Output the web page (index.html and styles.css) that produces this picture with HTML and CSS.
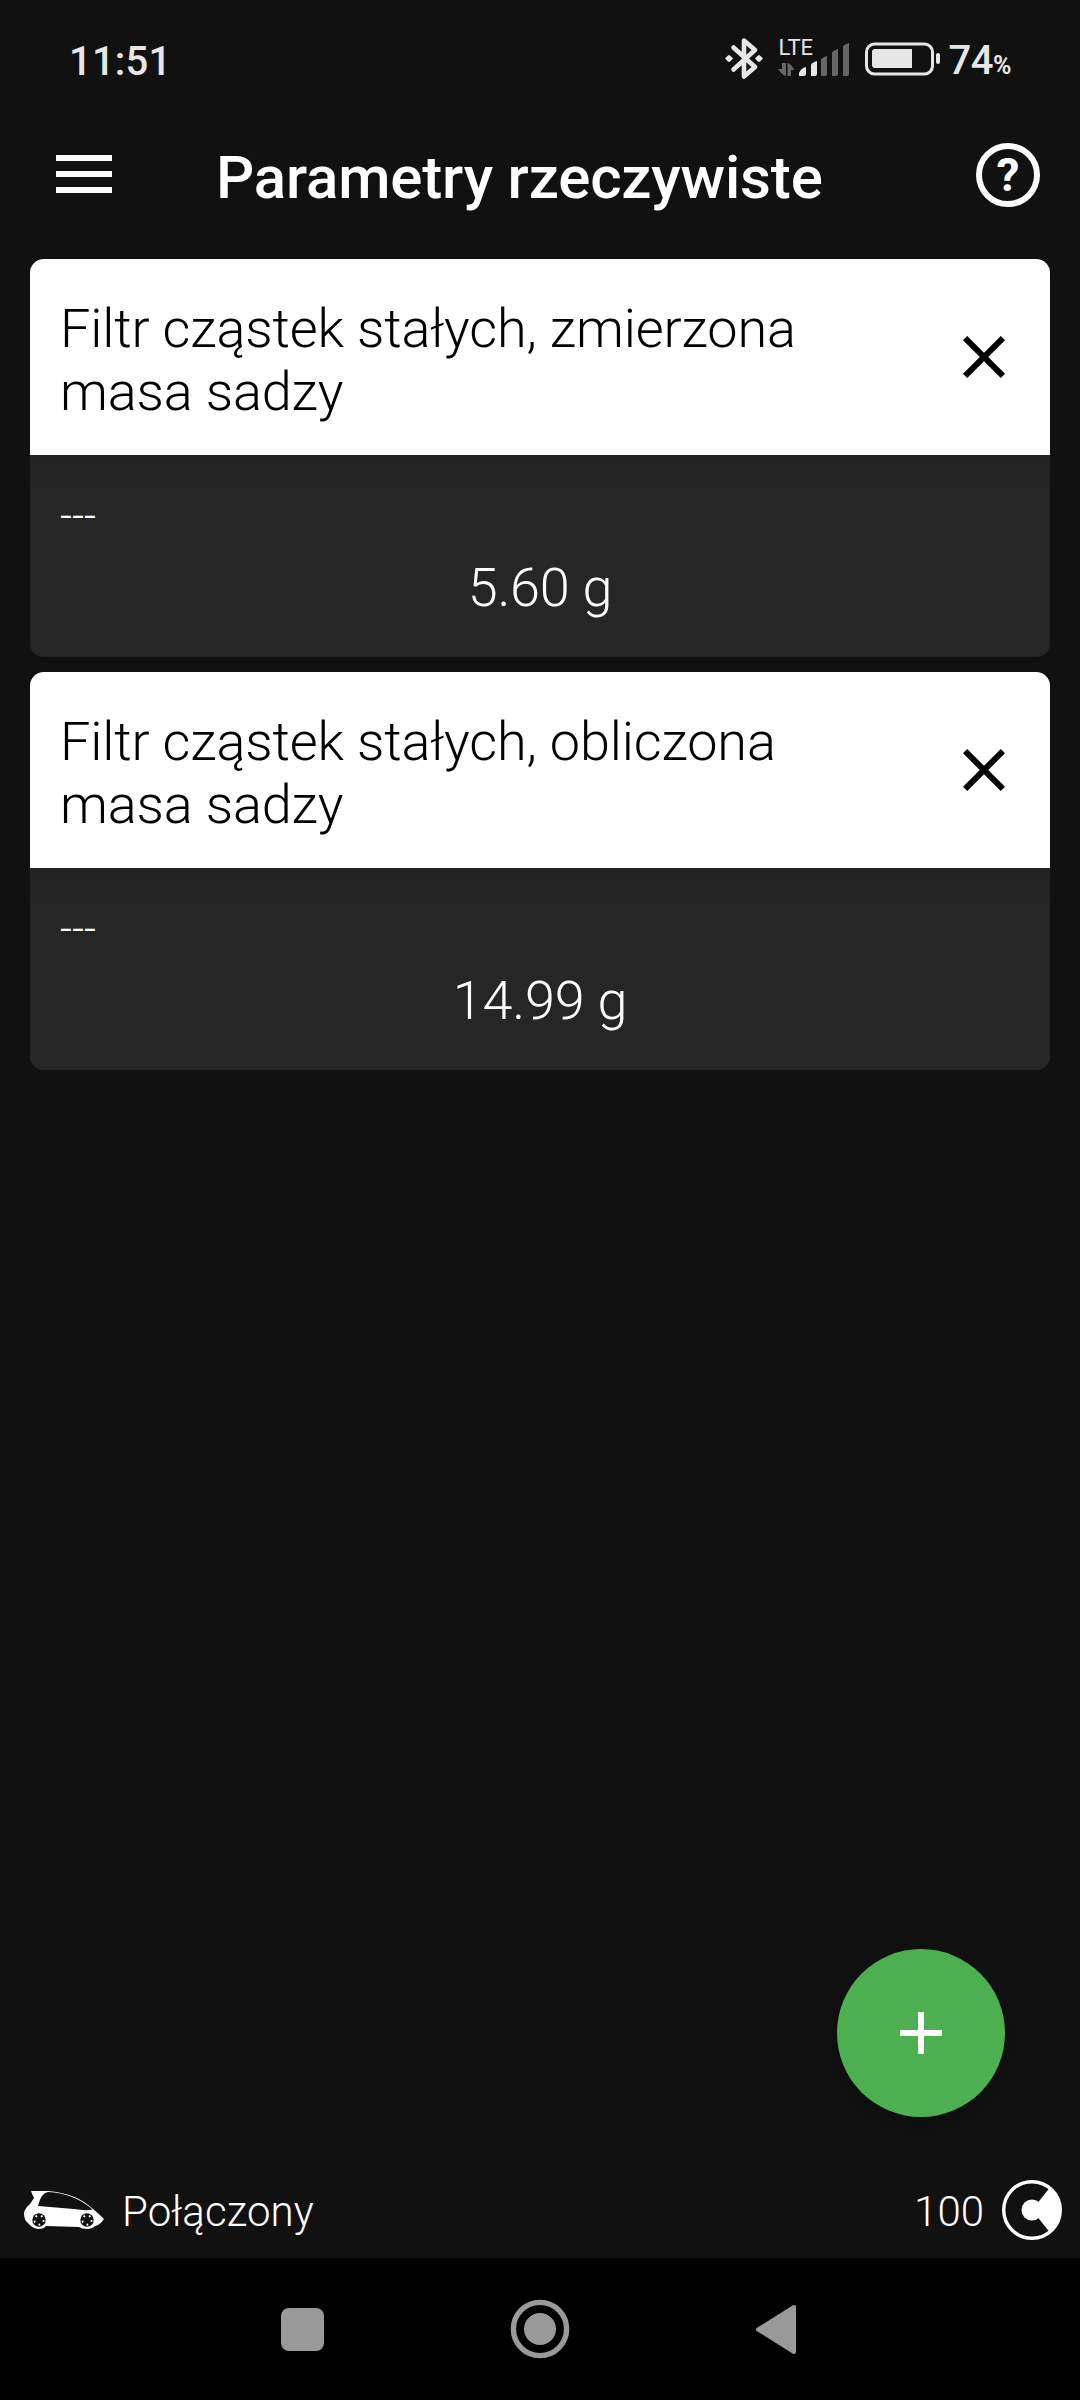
FILE: index.html
```html
<!DOCTYPE html>
<html lang="pl">
<head>
<meta charset="utf-8">
<title>Parametry rzeczywiste</title>
<link rel="stylesheet" href="styles.css">
</head>
<body>
<div class="screen">
  <div class="status-bar">
    <span class="clock">11:51</span>
    <div class="status-icons">
      <svg class="bluetooth" width="40" height="44" viewBox="0 0 40 44">
        <path d="M8.5 10.5L30 30L19 39.5V3.5L30 13L8.5 32.5" fill="none" stroke="#e6e6e6" stroke-width="4.6" stroke-linejoin="round" stroke-linecap="round"/>
        <path d="M4 18q1 0 4 3.5-3 3.5-4 3.5t-4-3.5q3-3.5 4-3.5zM34 18q1 0 4 3.5-3 3.5-4 3.5t-4-3.5q3-3.5 4-3.5z" fill="#e6e6e6"/>
      </svg>
      <div class="network">
        <span class="lte">LTE</span>
        <svg class="signal" width="72" height="34" viewBox="0 0 72 34">
          <g fill="#666">
            <path d="M4 20h4v13q-3 0-8-7h4zM9.5 33V20q3 0 7 7h-3.5v6z"/>
            <path d="M43 33V17q0-2 6-4v18q0 2-2 2zM54 33V10q0-2 6-4v25q0 2-2 2zM65 33V4q0-2 6-4v31q0 2-2 2z"/>
          </g>
          <path d="M21 33v-3q2-5 7-6v7q0 2-2 2zM33 33V22q0-2 6-4v13q0 2-2 2z" fill="#e6e6e6"/>
        </svg>
      </div>
      <svg class="battery" width="76" height="34" viewBox="0 0 76 34">
        <rect x="1.5" y="2" width="66" height="30" rx="8" fill="none" stroke="#e6e6e6" stroke-width="3"/>
        <path d="M10 7h37v19H10q-3 0-3-3V10q0-3 3-3z" fill="#e6e6e6"/>
        <rect x="71" y="11" width="4" height="11" rx="2" fill="#e6e6e6"/>
      </svg>
      <span class="percent">74<small>%</small></span>
    </div>
  </div>

  <header class="app-bar">
    <svg class="menu" width="56" height="38" viewBox="0 0 56 38"><path d="M0 0h56v6H0zM0 16h56v6H0zM0 32h56v6H0z" fill="#fff"/></svg>
    <h1>Parametry rzeczywiste</h1>
    <span class="help">?</span>
  </header>

  <main class="cards">
    <section class="card">
      <div class="card-head">
        <h2>Filtr cząstek stałych, zmierzona masa sadzy</h2>
        <svg width="42" height="42" viewBox="5 5 14 14"><path d="M19 6.41L17.59 5 12 10.59 6.41 5 5 6.41 10.59 12 5 17.59 6.41 19 12 13.41 17.59 19 19 17.59 13.41 12z"/></svg>
      </div>
      <div class="card-body">
        <div class="label">---</div>
        <div class="value">5.60 g</div>
      </div>
    </section>
    <section class="card">
      <div class="card-head">
        <h2>Filtr cząstek stałych, obliczona masa sadzy</h2>
        <svg width="42" height="42" viewBox="5 5 14 14"><path d="M19 6.41L17.59 5 12 10.59 6.41 5 5 6.41 10.59 12 5 17.59 6.41 19 12 13.41 17.59 19 19 17.59 13.41 12z"/></svg>
      </div>
      <div class="card-body">
        <div class="label">---</div>
        <div class="value">14.99 g</div>
      </div>
    </section>
  </main>

  <button class="fab" aria-label="Dodaj">
    <svg width="42" height="42" viewBox="0 0 42 42"><path d="M18 0h6v18h18v6H24v18h-6V24H0v-6h18z" fill="#fff"/></svg>
  </button>

  <footer class="connection">
    <svg class="car" width="80" height="40" viewBox="0 0 80 40">
      <path d="M7 1H24Q52 3 69 19Q74 23 80 29Q76 35 71 36Q68 39 63 39Q58 39 55 37L22 36Q20 39 14 39Q8 38 5 34Q0 31 0 23Q1 18 6 14L10 8Q8 4 7 1z" fill="#fff"/>
      <path d="M14 16Q17 3 24 2Q50 3 68.5 19.500Q62 21 50 19z" fill="#111"/>
      <g fill="#111"><circle cx="15" cy="30" r="6.7"/><circle cx="63" cy="30" r="6.7"/></g>
      <g fill="none" stroke="#fff" stroke-width="1.8" stroke-dasharray="1.8 3.98">
        <circle cx="15" cy="30" r="4.6"/>
        <circle cx="63" cy="30" r="4.6"/>
      </g>
    </svg>
    <span class="state">Połączony</span>
    <span class="count">100</span>
    <svg class="credit" width="60" height="60" viewBox="0 0 60 60">
      <circle cx="30" cy="30" r="28.3" fill="none" stroke="#fff" stroke-width="3.4"/>
      <path d="M30 30L47.5 8A28.1 28.1 0 0 1 47.5 52z" fill="#fff"/>
      <circle cx="30" cy="30" r="10.5" fill="#fff"/>
    </svg>
  </footer>

  <nav class="nav-bar">
    <svg width="43" height="43" viewBox="0 0 43 43"><rect width="43" height="43" rx="8"/></svg>
    <svg width="60" height="60" viewBox="0 0 60 60"><circle cx="30" cy="30" r="26.6" fill="none" stroke="#999" stroke-width="5.4"/><circle cx="30" cy="30" r="16"/></svg>
    <svg width="40" height="49" viewBox="0 0 40 49"><path d="M2 24.5L38 2V47z" stroke="#999" stroke-width="4" stroke-linejoin="round"/></svg>
  </nav>
</div>
</body>
</html>
```
FILE: styles.css
```css
* { box-sizing: border-box; }

body {
  margin: 0;
  background: #111;
  color: #fff;
  font-family: Roboto, sans-serif;
}

.screen {
  position: relative;
  display: flex;
  flex-direction: column;
  width: 1080px;
  height: 2400px;
}

.status-bar {
  display: flex;
  justify-content: space-between;
  align-items: center;
  height: 120px;
  padding: 0 69px 0 69px;
  color: #e6e6e6;
  font-size: 40px;
  font-weight: 500;
  line-height: 48px;
}

.clock { letter-spacing: 0.2px; padding-top: 3px; }

.status-icons { display: flex; align-items: center; height: 44px; margin-top: -2px; }
.bluetooth { margin-right: 13px; }

.network {
  display: flex;
  flex-direction: column;
  height: 41px;
  margin-right: 15px;
}

.lte {
  height: 4px;
  padding-left: 1px;
  font-size: 22px;
  font-weight: 400;
  line-height: 18px;
}

.percent { padding: 9px 0 0 8px; letter-spacing: -0.5px; }
.percent small { font-size: 25px; font-weight: 700; }

.app-bar {
  display: flex;
  align-items: center;
  height: 139px;
  padding: 0 40px 29px 56px;
}

.menu { margin-top: -2px; }

.app-bar h1 {
  flex: 1;
  margin: 0;
  padding: 5px 0 0 104px;
  font-size: 60px;
  font-weight: 500;
  letter-spacing: -0.16px;
  line-height: 70px;
}

.help {
  width: 64px;
  height: 64px;
  border: 6px solid #fff;
  border-radius: 50%;
  font-size: 46px;
  font-weight: 700;
  line-height: 53px;
  text-align: center;
}

.cards {
  display: flex;
  flex: 1;
  flex-direction: column;
  gap: 15px;
  padding: 0 30px;
}

.card {
  height: 398px;
  border-radius: 14px;
  background: #262626;
  overflow: hidden;
}

.card-head {
  display: flex;
  justify-content: space-between;
  align-items: center;
  height: 196px;
  padding: 0 45px 0 30px;
  background: #fff;
  color: #000;
}

.card-head h2 {
  width: 790px;
  margin: 0;
  padding-top: 5px;
  font-size: 54px;
  font-weight: 300;
  letter-spacing: -0.13px;
  line-height: 63px;
}

.card-body {
  height: 202px;
  padding: 36px 30px 0;
  background: linear-gradient(#222, #262626 36px);
  font-weight: 300;
}

.label { font-size: 42px; line-height: 49px; }
.value { margin-top: 16px; font-size: 54px; letter-spacing: -0.2px; line-height: 63px; text-align: center; }

.fab {
  position: absolute;
  top: 1949px;
  left: 837px;
  display: grid;
  place-items: center;
  width: 168px;
  height: 168px;
  padding: 0;
  border: 0;
  border-radius: 50%;
  background: #4caf50;
  box-shadow: 0 8px 18px rgba(0, 0, 0, 0.25);
}

.connection {
  display: flex;
  align-items: center;
  height: 96px;
  padding: 0 18px 0 24px;
  font-size: 42px;
  font-weight: 300;
  line-height: 50px;
}

.state { margin-left: 18px; padding-top: 3px; letter-spacing: 0.1px; }
.count { margin-left: auto; margin-right: 18px; padding-top: 3px; }

.nav-bar {
  display: flex;
  justify-content: space-between;
  align-items: center;
  height: 142px;
  padding: 0 284px 0 281px;
  background: #000;
}

.nav-bar svg { fill: #999; }
```
